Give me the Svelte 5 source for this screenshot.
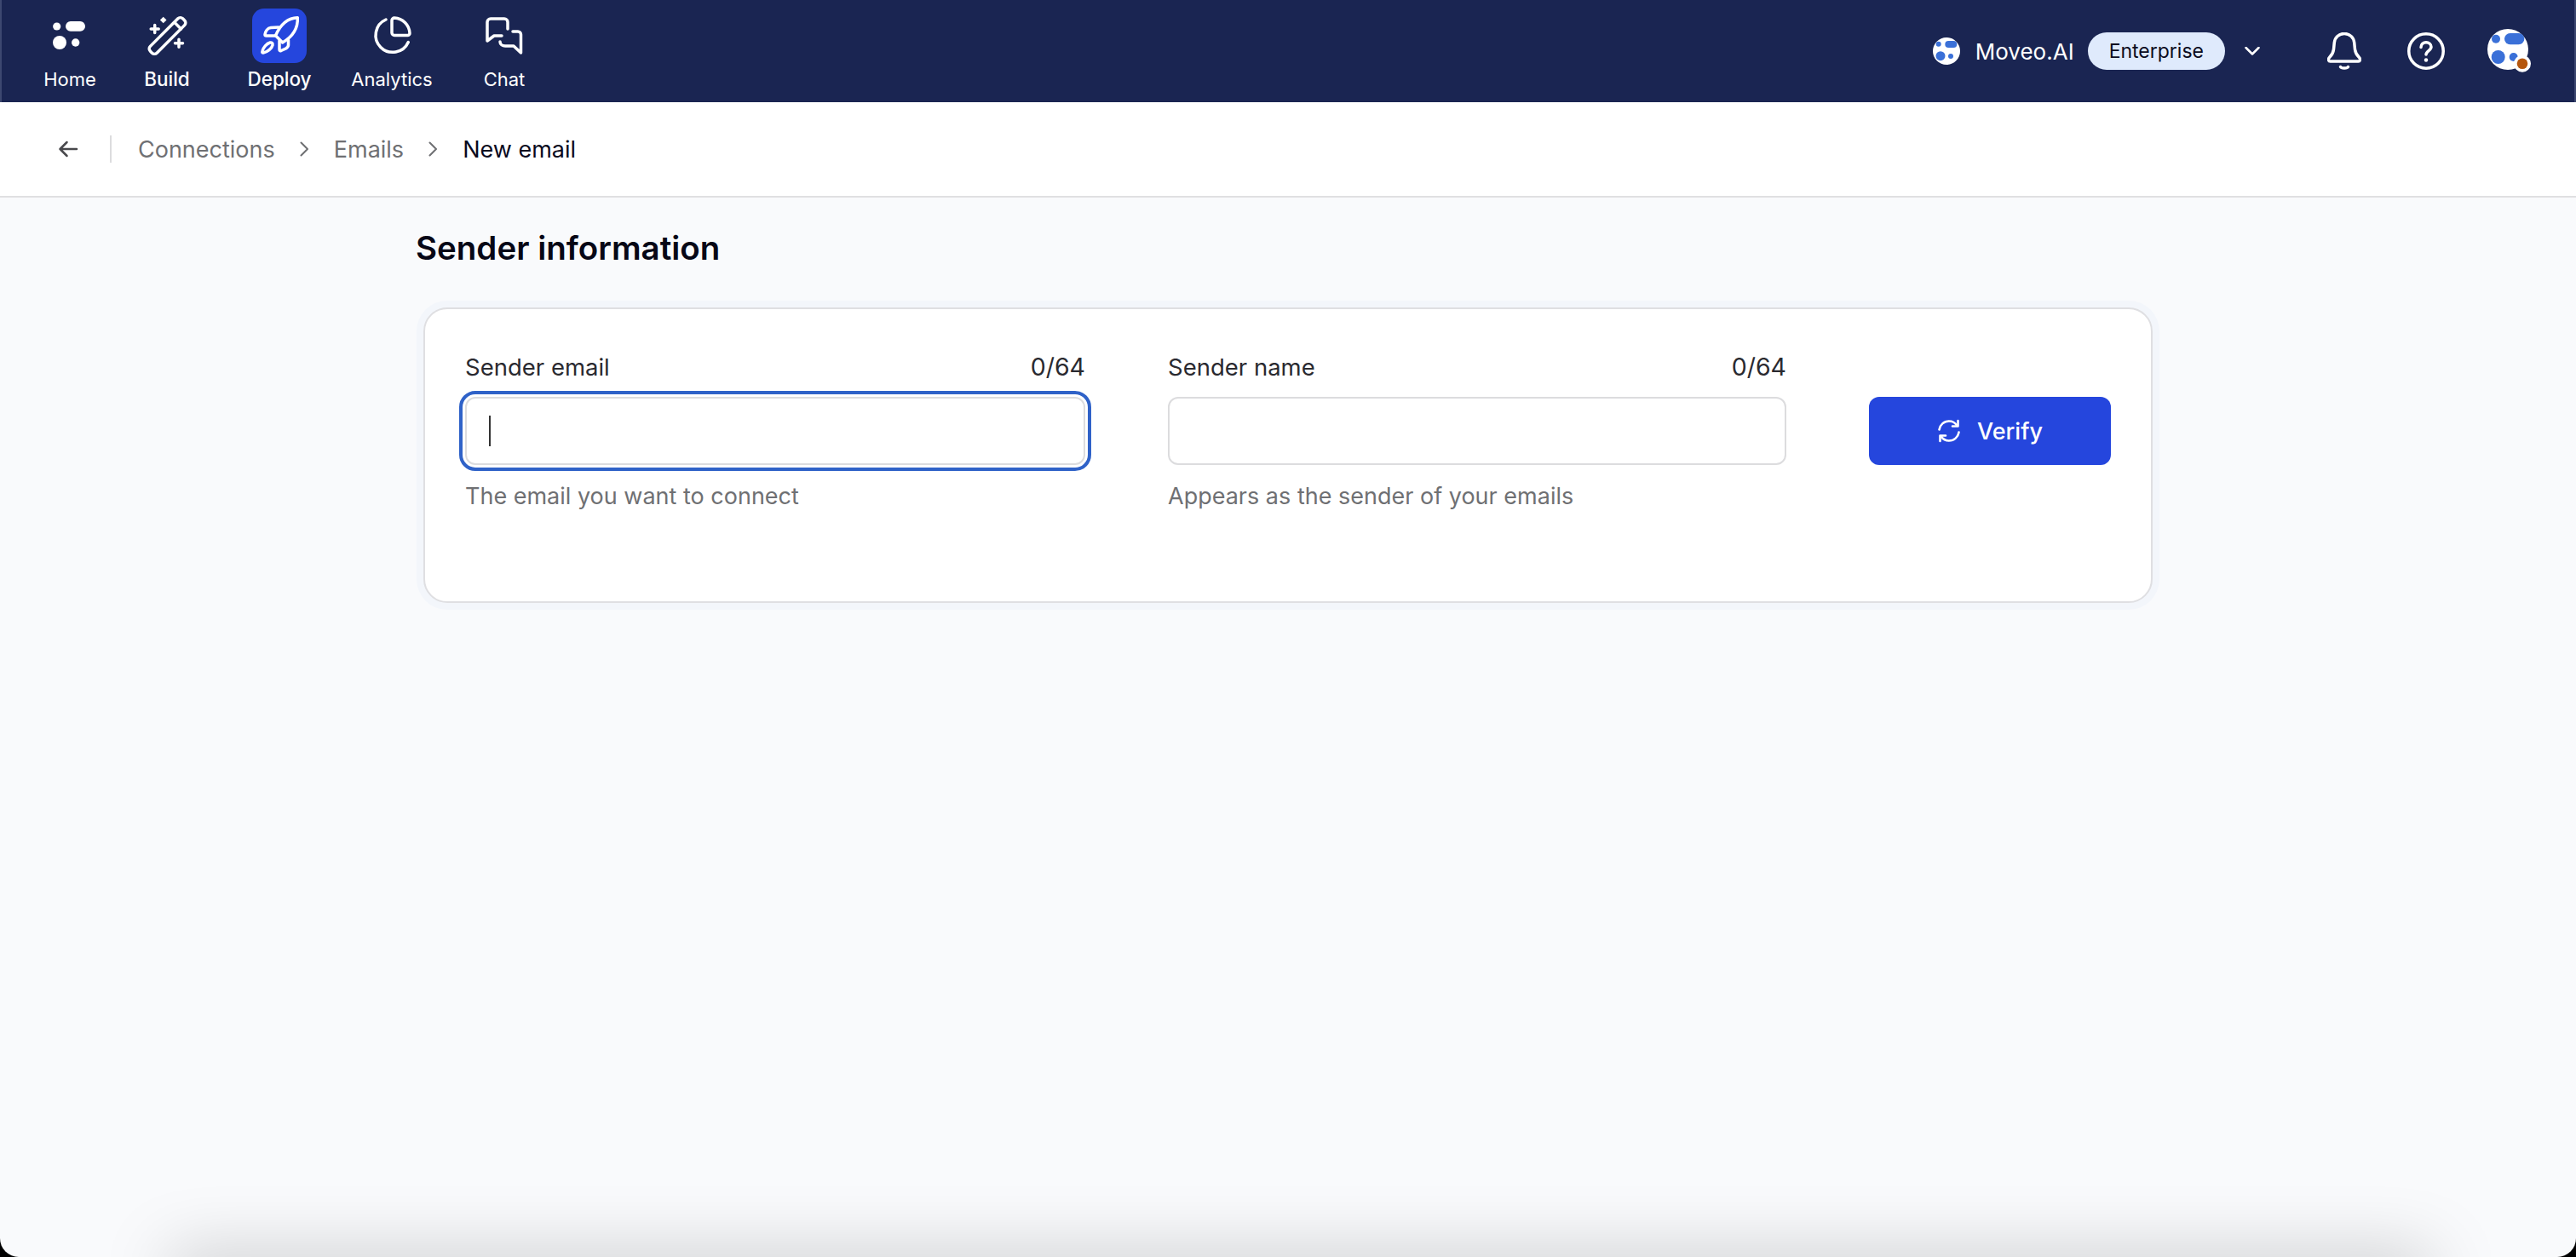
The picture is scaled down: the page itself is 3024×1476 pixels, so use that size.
<script>
	const navItems = [
		{ id: 'home', label: 'Home' },
		{ id: 'build', label: 'Build', strong: true },
		{ id: 'deploy', label: 'Deploy', strong: true, active: true },
		{ id: 'analytics', label: 'Analytics' },
		{ id: 'chat', label: 'Chat' }
	];

	const fields = [
		{ label: 'Sender email', hint: 'The email you want to connect', focused: true },
		{ label: 'Sender name', hint: 'Appears as the sender of your emails' }
	];
</script>

<div class="page">
	<header class="topbar">
		<nav class="nav">
			{#each navItems as item}
				<a class="nav-item {item.id}" class:strong={item.strong} href="#{item.id}">
					<span class="nav-icon" class:active={item.active}>
						<svg viewBox="0 0 64 64" width="64" height="64">
							{#if item.id === 'home'}
								<g fill="#fff">
									<circle cx="16.7" cy="21" r="4.6" />
									<rect x="27" y="15" width="23" height="11.7" rx="5.8" />
									<circle cx="20" cy="40" r="8" />
									<circle cx="38.7" cy="40" r="4.7" />
								</g>
							{:else if item.id === 'build'}
								<g fill="none" stroke="#fff" stroke-width="3.5" stroke-linecap="round" stroke-linejoin="round">
									<rect x="5.5" y="26.5" width="54" height="11" rx="4" transform="rotate(-45 32.5 32)" />
									<path d="M41 16.5l7.500 7.500" />
									<path d="M17.700 19.500v9M13.200 24h9M46 36.200v9M41.500 40.700h9" />
								</g>
								<path d="M27.700 9.700l3.800 3.800-3.800 3.800-3.800-3.800z" fill="#fff" />
							{:else if item.id === 'deploy'}
								<g fill="none" stroke="#fff" stroke-width="3.5" stroke-linecap="round" stroke-linejoin="round">
									<path d="M53.300 10.700C44 11 34 17 27.500 31.700L35.700 40C46 34 54 24 53.300 10.700z" />
									<path d="M31 22l-9 .5C18 23 15.500 27 15 30.500c0 1 .5 1.500 1.500 1.500H27" />
									<path d="M42.500 37v6c0 2-1.500 3-3 4l-5.500 2.500c-1.500.5-2 0-2-1.500V38" />
									<path d="M13 52c-1 0-1.500-.5-1-2 1-4 5-9 9-10 2-.5 3.500 1 3 3-1 4-6 8-11 9z" />
								</g>
							{:else if item.id === 'analytics'}
								<g fill="none" stroke="#fff" stroke-width="3.5" stroke-linecap="round" stroke-linejoin="round">
									<path d="M25 13a20 20 0 1 0 26.300 26.500" />
									<path d="M32 14a3 3 0 0 1 3-3a19 19 0 0 1 18 18a2.500 2.500 0 0 1-2.500 2.500H35a3 3 0 0 1-3-3z" />
								</g>
							{:else}
								<g fill="none" stroke="#fff" stroke-width="3.5" stroke-linecap="round" stroke-linejoin="round">
									<path d="M36 24v-8a4 4 0 0 0-4-4H16a4 4 0 0 0-4 4v22l8-6h9" />
									<path d="M42 27h6a3.500 3.500 0 0 1 3.500 3.500V52l-8.500-8H33c-3 0-6-2-6-5" />
								</g>
							{/if}
						</svg>
					</span>
					<span class="nav-label">{item.label}</span>
				</a>
			{/each}
		</nav>

		<div class="account">
			<svg class="org-logo" viewBox="-16 -16 32 32" width="32" height="32">
				<circle r="16" fill="#fff" />
				<g fill="#3a70d8">
					<circle cx="-9.300" cy="-8.300" r="3" />
					<rect x="-1.700" y="-12" width="14" height="8" rx="4" />
					<circle cx="-7" cy="5.700" r="5.500" />
					<circle cx="5" cy="6" r="3" />
				</g>
			</svg>
			<span class="org-name">Moveo.AI</span>
			<span class="plan">Enterprise</span>
			<svg class="chevron" viewBox="0 0 18 10" width="18" height="10">
				<path d="M1.500 1l7.500 7.500L16.500 1" fill="none" stroke="#fff" stroke-width="2.500" stroke-linecap="round" stroke-linejoin="round" />
			</svg>
			<svg class="bell" viewBox="0 0 40 44" width="40" height="44">
				<g fill="none" stroke="#fff" stroke-width="3.5" stroke-linecap="round" stroke-linejoin="round">
					<path d="M3.500 34c-2.500 0-2.500-3-1-4.500 3-3 4.500-5 5-9.500l.8-8C9 6 13.500 1.500 20 1.500S31 6 31.700 12l.8 8c.5 4.500 2 6.500 5 9.500 1.500 1.500 1.500 4.500-1 4.500z" />
					<path d="M15.500 40.500c1 2 8 2 9 0" />
				</g>
			</svg>
			<svg class="help" viewBox="0 0 44 44" width="44" height="44">
				<circle cx="22" cy="22" r="20.250" fill="none" stroke="#fff" stroke-width="3.500" />
				<path d="M16 17.500c0-3.500 2.800-5.800 6-5.800s6 2.300 6 5.400c0 4.400-6 4.500-6 9" fill="none" stroke="#fff" stroke-width="3.500" stroke-linecap="round" />
				<circle cx="22" cy="32.500" r="2.200" fill="#fff" />
			</svg>
			<svg class="avatar" viewBox="-24 -24 52 52" width="52" height="52">
				<circle r="24" fill="#fff" />
				<g fill="#3a70d8">
					<circle cx="-14" cy="-12.300" r="5" />
					<rect x="-4" y="-19" width="23.300" height="13.300" rx="6.600" />
					<circle cx="-11.300" cy="9" r="8" />
					<circle cx="6.700" cy="9" r="5" />
				</g>
				<circle cx="17" cy="16.700" r="10" fill="#fff" />
				<circle cx="17" cy="16.700" r="6.300" fill="#b5570f" />
			</svg>
		</div>
	</header>

	<div class="crumbs">
		<svg class="back" viewBox="0 0 24 20" width="24" height="20">
			<path d="M22 10H2.500M10.500 2l-8 8 8 8" fill="none" stroke="#48484c" stroke-width="2.500" stroke-linecap="round" stroke-linejoin="round" />
		</svg>
		<span class="crumb-divider"></span>
		<span class="crumb">Connections</span>
		<svg class="crumb-sep" viewBox="0 0 10 18" width="10" height="18">
			<path d="M1.500 1.500L9 9l-7.500 7.500" fill="none" stroke="#6f7073" stroke-width="2" stroke-linecap="round" stroke-linejoin="round" />
		</svg>
		<span class="crumb">Emails</span>
		<svg class="crumb-sep" viewBox="0 0 10 18" width="10" height="18">
			<path d="M1.500 1.500L9 9l-7.500 7.500" fill="none" stroke="#6f7073" stroke-width="2" stroke-linecap="round" stroke-linejoin="round" />
		</svg>
		<span class="crumb current">New email</span>
	</div>

	<main class="content">
		<h1>Sender information</h1>
		<section class="card">
			{#each fields as field}
				<div class="field">
					<div class="field-head">
						<span class="field-label">{field.label}</span>
						<span class="field-count">0/64</span>
					</div>
					<div class="input-box" class:focused={field.focused}>
						{#if field.focused}<span class="caret"></span>{/if}
						<input type="text" aria-label={field.label} />
					</div>
					<p class="hint">{field.hint}</p>
				</div>
			{/each}
			<button class="verify" type="button">
				<svg viewBox="0 0 28 28" width="28" height="28">
					<g fill="none" stroke="#fff" stroke-width="2.600" stroke-linecap="round" stroke-linejoin="round">
						<path d="M2.500 12.500C3.300 6.800 8 2.500 14 2.500c4 0 7.200 2 9.200 5" />
						<path d="M24.500 2v6.500H18" />
						<path d="M25.500 15.500c-.8 5.700-5.500 10-11.500 10-4 0-7.200-2-9.200-5" />
						<path d="M3.500 26v-6.500H10" />
					</g>
				</svg>
				<span>Verify</span>
			</button>
		</section>
	</main>

	<div class="dock-shadow"></div>
</div>

<style>
	:global(body) {
		background: #000;
	}

	.page {
		position: relative;
		height: 1476px;
		overflow: hidden;
		background: #f9fafc;
		border-radius: 0 0 22px 22px;
		font-family: Inter, "Liberation Sans", sans-serif;
	}

	.topbar {
		display: flex;
		justify-content: space-between;
		align-items: center;
		height: 120px;
		box-sizing: border-box;
		background: #1a2552;
		border-left: 2px solid #3d4870;
		border-right: 2px solid #3d4870;
	}

	.nav {
		display: flex;
		align-self: flex-start;
		padding: 10px 0 0 32px;
	}

	.nav-item {
		display: flex;
		flex-direction: column;
		align-items: center;
		width: 132px;
		color: #fff;
		text-decoration: none;
	}

	.nav-item.home {
		width: 96px;
	}

	.nav-icon {
		display: block;
		width: 64px;
		height: 64px;
		border-radius: 14px;
	}

	.nav-icon svg {
		display: block;
	}

	.nav-icon.active {
		background: #2546dd;
	}

	.nav-label {
		margin-top: 5px;
		font-size: 22px;
		line-height: 28px;
		white-space: nowrap;
	}

	.strong .nav-label {
		font-size: 22.5px;
		font-weight: 500;
	}

	.account {
		display: flex;
		align-items: center;
		padding-right: 50px;
	}

	.org-name {
		margin-left: 18px;
		font-size: 26px;
		color: #fff;
	}

	.plan {
		display: flex;
		align-items: center;
		height: 44px;
		margin-left: 16px;
		padding: 0 25px;
		border-radius: 22px;
		background: #dfeafc;
		color: #0c0c20;
		font-size: 23px;
	}

	.chevron {
		margin-left: 23px;
	}

	.bell {
		margin-left: 79px;
	}

	.help {
		margin-left: 54px;
	}

	.avatar {
		margin-left: 50px;
	}

	.crumbs {
		display: flex;
		align-items: center;
		height: 112px;
		box-sizing: border-box;
		padding-left: 68px;
		background: #fff;
		border-bottom: 2px solid #e0e0e2;
		font-size: 27px;
	}

	.crumb-divider {
		width: 2px;
		height: 32px;
		margin: 0 31px 0 37px;
		background: #dcdcde;
	}

	.crumb {
		color: #6f7073;
	}

	.crumb.current {
		color: #0a0a1e;
	}

	.crumb-sep {
		margin: 0 30px 0 29px;
	}

	.content {
		padding: 0 0 0 488px;
	}

	h1 {
		margin: 0;
		padding-top: 40px;
		font-size: 38.5px;
		line-height: 38px;
		font-weight: 600;
		color: #070716;
	}

	.card {
		display: grid;
		grid-template-columns: 728px 726px 284px;
		column-gap: 97px;
		align-items: start;
		width: 2030px;
		height: 347px;
		box-sizing: border-box;
		margin: 51px 0 0 9px;
		padding: 52px 48px 48px 47px;
		background: #fff;
		border: 2px solid #dfdfe2;
		border-radius: 28px;
		box-shadow: 0 0 0 8px #f3f6fb;
	}

	.field {
		display: flex;
		flex-direction: column;
	}

	.field-head {
		display: flex;
		justify-content: space-between;
		align-items: center;
		font-size: 27.5px;
		line-height: 32px;
		color: #2a2a30;
	}

	.field-count {
		font-size: 28.5px;
	}

	.input-box {
		display: flex;
		align-items: center;
		height: 80px;
		box-sizing: border-box;
		margin-top: 19px;
		padding-left: 26px;
		background: #fff;
		border: 2px solid #dcdcde;
		border-radius: 12px;
	}

	.input-box.focused {
		outline: 4px solid #2f62c8;
		outline-offset: 3px;
	}

	.caret {
		flex: none;
		width: 2px;
		height: 36px;
		background: #333;
	}

	input {
		flex: 1;
		min-width: 0;
		border: 0;
		outline: 0;
		background: transparent;
	}

	.hint {
		margin: 21px 0 0;
		font-size: 27px;
		line-height: 32px;
		color: #6f7073;
	}

	.verify {
		display: flex;
		align-items: center;
		justify-content: center;
		gap: 19px;
		height: 80px;
		margin-top: 51px;
		border: 0;
		border-radius: 12px;
		background: #2546dd;
		color: #fff;
		font-family: inherit;
		font-size: 27px;
		font-weight: 500;
	}

	.dock-shadow {
		position: absolute;
		left: 200px;
		right: 170px;
		bottom: -40px;
		height: 40px;
		box-shadow: 0 0 80px rgba(0, 0, 0, 0.26);
		background: rgba(0, 0, 0, 0.26);
	}
</style>
